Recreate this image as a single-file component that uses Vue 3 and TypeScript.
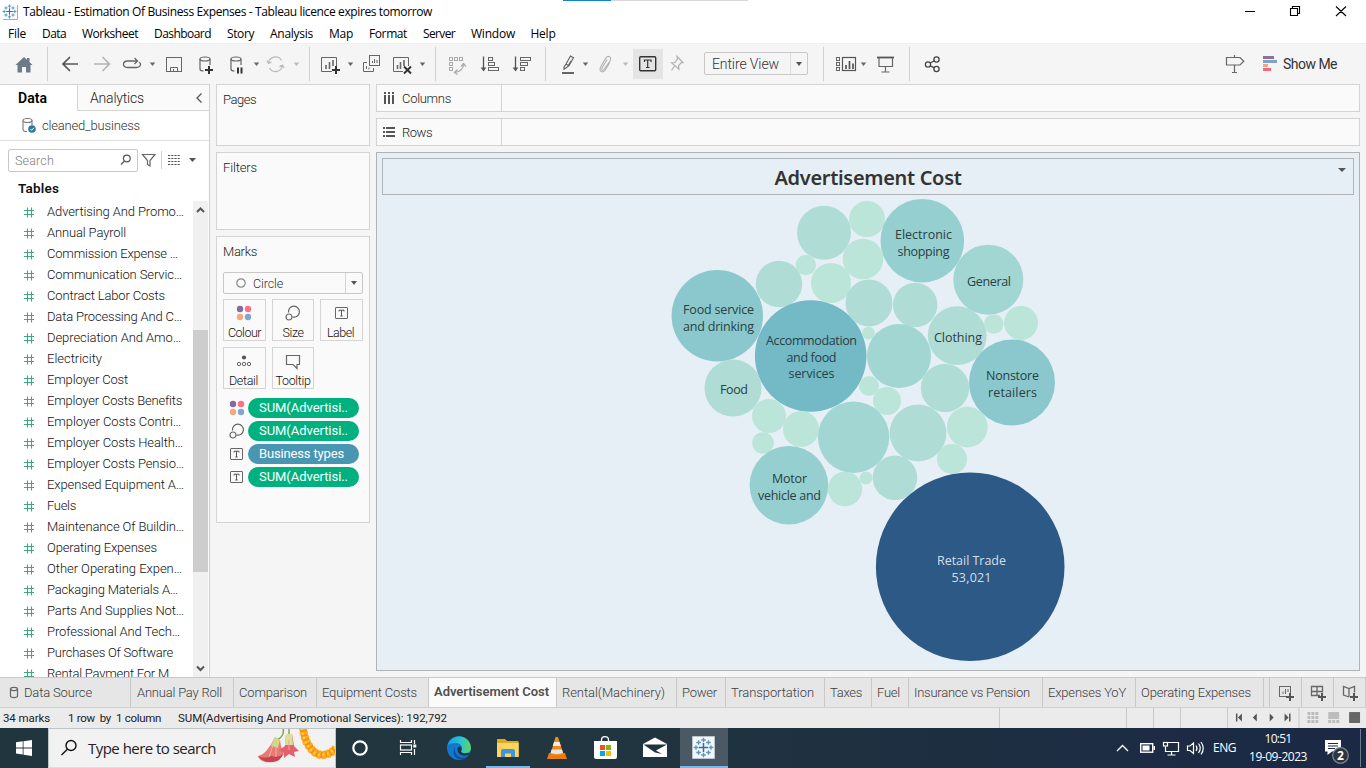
<script setup lang="ts">
interface Cell { x: number; w: number; art: string }
interface Bubble { x: number; y: number; r: number; c: string }
interface Label { x: number; y: number; w: number; t: string }

// Spreads the letters of a label so that it fills the given width in pixels.
const vFit = {
  mounted(el: HTMLElement, binding: { value: number }) {
    const chars = (el.textContent ?? '').length
    const natural = el.getBoundingClientRect().width
    el.style.letterSpacing = `${(binding.value - natural) / chars}px`
  },
}

const menus: [string, number, number][] = [
  ['File', 34, 18], ['Data', 40, 24], ['Worksheet', 72, 56], ['Dashboard', 73, 57], ['Story', 43, 27],
  ['Analysis', 59, 43], ['Map', 40, 24], ['Format', 54, 38], ['Server', 48, 32], ['Window', 60, 44], ['Help', 40, 25],
]

const caret = (x: number, c = '#666') => `<path d="M${x - 2.7} 62.500h5.400l-2.700 3.500z" fill="${c}"/>`
const sep = (x: number) => `<path d="M${x} 47v34" stroke="#cfcfcf"/>`
const box = (x: number, y: number, w: number, h: number, c = '#666') =>
  `<rect x="${x}" y="${y}" width="${w}" height="${h}" fill="none" stroke="${c}"/>`
const cylinder = (x: number) =>
  `<g fill="none" stroke="#666" stroke-width="1.200"><ellipse cx="${x + 5}" cy="59" rx="5" ry="2"/><path d="M${x} 59v10q0 2 3.500 2M${x + 10} 59v6"/></g>`
const plus = (x: number, y: number) => `<path d="M${x - 4} ${y}h8M${x} ${y - 4}v8" stroke="#333" stroke-width="2"/>`
const plusGrey = (x: number, y: number) => `<path d="M${x - 4} ${y}h8M${x} ${y - 4}v8" stroke="#555" stroke-width="2"/>`

const tools: Cell[] = [
  { x: 0, w: 50, art: `<path d="M15.500 65L24 57l3 2.800V58h2.500v4l3 3H30.500v7.500H26v-5.500h-4v5.500H17.500V65z" fill="#6c7a8a"/>` + sep(47.5) },
  { x: 50, w: 36, art: `<path d="M78 64H63M70 57l-7 7 7 7" fill="none" stroke="#555" stroke-width="1.700"/>` },
  { x: 86, w: 32, art: `<path d="M94 64h15M102.500 57l7 7-7 7" fill="none" stroke="#b5b5b5" stroke-width="1.700"/>` },
  { x: 118, w: 42, art: `<path d="M132 67.500h-4.500q-4-.300-4-3.300t4-3.200H137M134.500 58l3 3-3 3M139 62.300q1.700 1 1.500 2.200-.300 2.700-4 3H132" fill="none" stroke="#666" stroke-width="1.300"/>` + caret(152.5) },
  { x: 160, w: 30, art: box(166.5, 57.5, 15, 14) + `<path d="M170.500 71.500v-4h7v4M173.500 69v2" fill="none" stroke="#666"/>` },
  { x: 190, w: 32, art: cylinder(200) + plus(209, 70) },
  { x: 222, w: 42, art: cylinder(231) + `<path d="M238 67.500v6M241.500 67.500v6" stroke="#333" stroke-width="2"/>` + caret(256.5) },
  { x: 264, w: 47, art: `<path d="M268.500 63a7 7 0 0 1 13-2.500M282.500 65.500a7 7 0 0 1-13 2.500M267 60.500l1.500 3 3-1.500M284 68l-1.500-3-3 1.500" fill="none" stroke="#b9b9b9" stroke-width="1.200"/>` + caret(296.5, '#bbb') + sep(309.5) },
  { x: 311, w: 47, art: `<path d="M332 71.500H321.500V57.500h15V66" fill="none" stroke="#666"/><path d="M326 69v-4M329.500 69v-7M333 66v-6" stroke="#666" stroke-width="1.600"/>` + plus(336, 70) + caret(350.5) },
  { x: 358, w: 27, art: `<path d="M367 62.500h-3.500v9h10v-3.500M366.500 69v-3M369 69.500v-2" fill="none" stroke="#666"/>` + box(369.5, 55.5, 10, 10) + `<path d="M372.500 63v-2M374.500 63v-4M377 63v-3" stroke="#666"/>` },
  { x: 385, w: 52, art: `<path d="M403 71.500H393.500V57.500h15V66" fill="none" stroke="#666"/><path d="M397.500 69v-4M400.500 69v-7M404 66v-6" stroke="#666" stroke-width="1.600"/><path d="M404 66.500l7 7M411 66.500l-7 7" stroke="#333" stroke-width="2"/>` + caret(422.5) + sep(435.5) },
  { x: 437, w: 36, art: box(449.5, 57.5, 3, 3, '#aaa') + box(454.500, 57.5, 3, 3, '#aaa') + box(459.5, 57.5, 3, 3, '#aaa') + box(449.5, 62.5, 3, 3, '#aaa') + box(449.5, 67.5, 3, 3, '#aaa') + `<path d="M463.500 64q0 7-8.500 8.500M461 66.500l2.500-3 2.500 3M457.500 69.500l-3 3 3 2" fill="none" stroke="#aaa" stroke-width="1.200"/>` },
  { x: 473, w: 32, art: `<path d="M483.500 56.500v13" stroke="#555" stroke-width="1.300"/><path d="M480.700 67.500h5.600l-2.800 4z" fill="#555"/>` + box(488.5, 57.5, 4, 3) + box(488.5, 62.500, 6, 3) + box(488.5, 67.5, 10, 3) },
  { x: 505, w: 42, art: `<path d="M515.500 56.500v13" stroke="#555" stroke-width="1.300"/><path d="M512.700 67.500h5.600l-2.800 4z" fill="#555"/>` + box(520.5, 57.5, 10, 3) + box(520.5, 62.500, 7, 3) + box(520.5, 67.5, 4, 3) + sep(545.5) },
  { x: 547, w: 46, art: `<path d="M566 64l4.500-8 3 1.700-4.500 8-3.500 2.500-1.500 1v-2zM566 64l3 1.700M568 66l3-5" fill="none" stroke="#666" stroke-width="1.200"/><path d="M562 73h12" stroke="#555" stroke-width="1.800"/>` + caret(585.5) },
  { x: 593, w: 40, art: `<path d="M607 59.500l-5 8.500q-1 2 .700 2.300 1 .100 1.500-1L610 61q1.600-3.300-.500-4.300-2-.900-3.600 1.200l-5 8.500q-2 4 .400 5.200 2.600.900 4-1.600l4.500-7.500" fill="none" stroke="#b2b2b2" stroke-width="1.100"/>` + caret(625.5, '#bbb') },
  { x: 633, w: 30, art: `<path d="M633 49h30v30h-30z" fill="#e4e4e4"/><rect x="639.700" y="56.700" width="16" height="14" rx="1" fill="none" stroke="#333" stroke-width="1.400"/><path d="M644.500 62v-2h6.500v2M647.700 60v7.500M646 67.500h3.500" fill="none" stroke="#333" stroke-width="1.200"/>` },
  { x: 663, w: 41, art: `<path d="M677 56.500l6 6-2 .300-2.500 3 .500 3.500-7.500-6.500 3.500-.300 2.500-3.500zM674.500 66l-3 4.500" fill="none" stroke="#b2b2b2" stroke-width="1.200"/>` },
]
const toolsAfter: Cell[] = [
  { x: 808, w: 64, art: sep(823.5) + box(836.5, 57.5, 3, 3) + box(836.5, 62.5, 3, 3) + box(836.5, 67.5, 3, 3) + `<rect x="842.500" y="57.500" width="13" height="13" fill="none" stroke="#555" stroke-width="1.200"/><path d="M846 69v-4M849.500 69v-8M853 69v-5.500" stroke="#555" stroke-width="1.700"/>` + caret(863.5) },
  { x: 872, w: 38, art: `<path d="M877 57.500h17" stroke="#555" stroke-width="1.800"/><path d="M879 58v8.500h13.500V58M885.500 66.500v5.500M881.500 72h8" fill="none" stroke="#666" stroke-width="1.200"/>` + sep(909.5) },
  { x: 910, w: 40, art: `<g fill="none" stroke="#444" stroke-width="1.300"><circle cx="928" cy="64.500" r="2.600"/><circle cx="936.500" cy="59.500" r="2.600"/><circle cx="936.500" cy="69" r="2.600"/><path d="M930.300 63l4-2.200M930.300 65.800l4 2"/></g>` },
]
const signpost: Cell = { x: 1216, w: 40, art: `<path d="M1226.500 57.500h13.500l3.800 3.800-3.800 3.700h-13.500zM1234.500 55v2.500M1234.500 65v7.500M1232 72.500h5" fill="none" stroke="#666" stroke-width="1.200"/>` }
const showMe: Cell = { x: 1256, w: 27, art: `<path d="M1263 56h11v3h-11z" fill="#8b6f9c"/><path d="M1263 60h14v3h-14z" fill="#7da3cc"/><path d="M1263 64h5v3h-5z" fill="#f3a67a"/><path d="M1263 68h8v3h-8z" fill="#f6677c"/>` }

const fields: [string, number][] = [
  ['Advertising And Promo…', 137], ['Annual Payroll', 79], ['Commission Expense …', 131], ['Communication Servic…', 135],
  ['Contract Labor Costs', 118], ['Data Processing And C…', 135], ['Depreciation And Amo…', 134], ['Electricity', 55],
  ['Employer Cost', 81], ['Employer Costs Benefits', 135], ['Employer Costs Contri…', 134], ['Employer Costs Health…', 136],
  ['Employer Costs Pensio…', 137], ['Expensed Equipment A…', 137], ['Fuels', 29], ['Maintenance Of Buildin…', 137],
  ['Operating Expenses', 110], ['Other Operating Expen…', 135], ['Packaging Materials A…', 131], ['Parts And Supplies Not…', 137],
  ['Professional And Tech…', 133], ['Purchases Of Software', 126], ['Rental Payment For M', 122],
]

const dots = `<circle cx="-4" cy="-4" r="3.200" fill="#836c99"/><circle cx="4" cy="-4" r="3.200" fill="#fb7287"/><circle cx="-4" cy="4" r="3.200" fill="#f5a880"/><circle cx="4" cy="4" r="3.200" fill="#7fa6cf"/>`
const sizeArt = `<g fill="none" stroke="#666" stroke-width="1.200"><path d="M-4.500-.500A5.500 5.500 0 1 1-.500 4"/><circle cx="-4" cy="4" r="3"/></g>`
const textArt = `<rect x="-6.500" y="-5.500" width="12" height="11" rx=".500" fill="none" stroke="#666"/><path d="M-3-1.500v-1.300h5v1.300M-.500-2.800V3M-1.700 3h2.400" fill="none" stroke="#555"/>`
const detailArt = `<circle cx="0" cy="-3.500" r="2.100" fill="#555"/><g fill="none" stroke="#666"><circle cx="-5" cy="3" r="1.700"/><circle cx="0" cy="3" r="1.700"/><circle cx="5" cy="3" r="1.700"/></g>`
const tipArt = `<path d="M-6.500-5.500h13v9H4v4l-4-4h-6.500z" fill="none" stroke="#666" stroke-width="1.200"/>`
const markButtons = [
  { t: 'Colour', w: 33, art: dots }, { t: 'Size', w: 21, art: sizeArt }, { t: 'Label', w: 27, art: textArt },
  { t: 'Detail', w: 29, art: detailArt }, { t: 'Tooltip', w: 35, art: tipArt },
]
const pills = [
  { t: 'SUM(Advertisi..', w: 89, art: dots, dim: false }, { t: 'SUM(Advertisi..', w: 89, art: sizeArt, dim: false },
  { t: 'Business types', w: 85, art: textArt, dim: true }, { t: 'SUM(Advertisi..', w: 89, art: textArt, dim: false },
]

const c1 = '#bce5d9', c2 = '#afddd6', c3 = '#a1d6d2', c4 = '#95cfcf', c5 = '#8bc8cd'
const bubbles: Bubble[] = [
  { x: 824, y: 232.7, r: 27, c: c2 }, { x: 867, y: 219, r: 18, c: c1 }, { x: 922.3, y: 240.7, r: 41.8, c: c4 },
  { x: 988.3, y: 279.7, r: 35, c: c3 }, { x: 805.8, y: 265, r: 10.2, c: c1 }, { x: 863, y: 259, r: 20.3, c: c1 },
  { x: 779, y: 284, r: 23.2, c: c2 }, { x: 831, y: 283, r: 20, c: c1 }, { x: 717.3, y: 315.7, r: 45.7, c: c5 },
  { x: 810.7, y: 356, r: 55.8, c: '#73b9c6' }, { x: 869, y: 303, r: 23.5, c: c2 }, { x: 915.2, y: 305, r: 22.2, c: c2 },
  { x: 957.2, y: 335.7, r: 29.4, c: c2 }, { x: 993.8, y: 324, r: 9.8, c: c1 }, { x: 1021, y: 323, r: 17, c: c1 },
  { x: 868.5, y: 333, r: 6.3, c: c1 }, { x: 899, y: 356, r: 32, c: c3 }, { x: 869, y: 386, r: 10, c: c1 },
  { x: 887, y: 401, r: 14, c: c1 }, { x: 945, y: 388, r: 24.2, c: c2 }, { x: 1012, y: 382.4, r: 43, c: c5 },
  { x: 733, y: 388, r: 28.5, c: c2 }, { x: 769, y: 416, r: 17, c: c1 }, { x: 763, y: 443, r: 10.8, c: c1 },
  { x: 801, y: 429, r: 18, c: c1 }, { x: 853.6, y: 437.2, r: 35.7, c: c3 }, { x: 918, y: 433, r: 28.4, c: c2 },
  { x: 967.3, y: 427, r: 20.4, c: c1 }, { x: 952, y: 459, r: 15, c: c1 }, { x: 788.9, y: 485.3, r: 39.3, c: c4 },
  { x: 845, y: 489, r: 17.2, c: c1 }, { x: 866, y: 478, r: 6.5, c: c1 }, { x: 895, y: 477.8, r: 22.3, c: c2 },
  { x: 970.2, y: 566.8, r: 94.3, c: '#2c5985' },
]
const labels: Label[] = [
  { x: 923.5, y: 239, w: 57, t: 'Electronic' }, { x: 923.5, y: 256, w: 52, t: 'shopping' }, { x: 989, y: 286, w: 44, t: 'General' },
  { x: 718.5, y: 314, w: 71, t: 'Food service' }, { x: 718.5, y: 331, w: 71, t: 'and drinking' },
  { x: 811.5, y: 345, w: 91, t: 'Accommodation' }, { x: 811.5, y: 362, w: 50, t: 'and food' }, { x: 811.5, y: 378, w: 46, t: 'services' },
  { x: 958, y: 342, w: 48, t: 'Clothing' }, { x: 1012.5, y: 380, w: 53, t: 'Nonstore' }, { x: 1012.5, y: 397, w: 49, t: 'retailers' },
  { x: 734, y: 394, w: 28, t: 'Food' }, { x: 789.5, y: 483, w: 35, t: 'Motor' }, { x: 789.5, y: 500, w: 63, t: 'vehicle and' },
]
const darkLabels: Label[] = [
  { x: 971.5, y: 565, w: 69, t: 'Retail Trade' }, { x: 971.5, y: 582, w: 40, t: '53,021' },
]

const sheets = [
  { t: 'Annual Pay Roll', w: 103, tw: 85 }, { t: 'Comparison', w: 83, tw: 68 }, { t: 'Equipment Costs', w: 112, tw: 95 },
  { t: 'Advertisement Cost', w: 128, tw: 115 }, { t: 'Rental(Machinery)', w: 120, tw: 103 }, { t: 'Power', w: 49, tw: 35 },
  { t: 'Transportation', w: 99, tw: 83 }, { t: 'Taxes', w: 47, tw: 32 }, { t: 'Fuel', w: 37, tw: 23 },
  { t: 'Insurance vs Pension', w: 134, tw: 116 }, { t: 'Expenses YoY', w: 93, tw: 78 }, { t: 'Operating Expenses', w: 128, tw: 110 },
]
const newSheets: Cell[] = [
  { x: 1269, w: 32, art: box(1278.500, 686.5, 11, 10) + `<path d="M1282 694v-2.500M1284.500 694v-5M1287 692v-3" stroke="#666"/>` + plusGrey(1289, 697) },
  { x: 1301, w: 32, art: `<path d="M1319 695.500h-8.500v-9h11v6M1310.500 691.500h11M1316 686.500v9" fill="none" stroke="#666" stroke-width="1.300"/>` + plusGrey(1321, 697) },
  { x: 1333, w: 33, art: `<path d="M1348 697l-5.500-2v-8.500l5.500 2 5.500-2v6M1348 688.500v8.500" fill="none" stroke="#666" stroke-width="1.300"/>` + plusGrey(1353, 697) },
]
const nav: Cell = { x: 1228, w: 138, art: `<g fill="#555"><path d="M1236 713.500h1.500v8H1236zM1242 713.500v8l-4-4zM1257 713.500v8l-4-4zM1270 713.500v8l4-4zM1285 713.500v8l4-4zM1289.500 713.500h1.500v8h-1.500z"/><rect x="1350" y="712" width="11" height="11" fill="#666"/></g><path d="M1299.500 708v20" stroke="#c9c9c9"/><path d="M1308 713.500h11M1308 717.500h11M1308 721.500h11" stroke="#bcbcbc" stroke-width="3" stroke-dasharray="3 1"/><path d="M1329 712h11v7h-11z" fill="#bcbcbc"/><path d="M1329 721.500h11" stroke="#bcbcbc" stroke-width="3" stroke-dasharray="3 1"/>` }

const cross = (x: number, y: number, r: number) => `M${x - r} ${y}h${2 * r}M${x} ${y - r}v${2 * r}`
const tableau = (x: number, y: number, k: number) => {
  const far = 6.5 * k, near = 4.3 * k
  const arms = [[0, -far], [0, far], [-far, 0], [far, 0], [-near, -near], [near, -near], [-near, near], [near, near]]
  return `<path d="${cross(x, y, 4 * k)}" stroke="#2f6f9f" stroke-width="${1.3 * k}"/><path d="${arms.map(([dx, dy]) => cross(x + dx, y + dy, 2 * k)).join('')}" stroke="#5f98be" stroke-width="${1.2 * k}"/>`
}
const appIcon = tableau(9.5, 10.5, 0.82)

const garland = `<path d="M303 727q1 12 6 19 6 9 14 9 8-1 13-7" fill="none" stroke="#f98f08" stroke-width="7"/><path d="M303 727q1 12 6 19 6 9 14 9 8-1 13-7" fill="none" stroke="#ffad20" stroke-width="8.500" stroke-dasharray="2.800 1.800"/><path d="M302 728q1 11 6 18 6 9 14 9 8-1 13-7" fill="none" stroke="#ffd257" stroke-width="2" stroke-dasharray="2 2.600"/>`
const flowers = `<path d="M283 728q2 8-6 12M289 728v8" fill="none" stroke="#8aa548" stroke-width="1.500"/>
<path d="M275 737l5 3q1 9 4 14l-5 5q-6 4-14 3-6-2-7-6 5-1 9-6 5-6 8-13z" fill="#e87974"/><path d="M275 737l5 3-2 8-7-2z" fill="#cfd98a"/><path d="M258 756q8 3 13 0 7 2 12-2-2 7-10 8-10 1-15-6z" fill="#c9434d"/><path d="M273 745l-4 12M276 746l0 11" stroke="#f5b2a2"/>
<path d="M286 734h6l2 12 5 5-5 1 1 5-6-3-5 4v-5l-5-3 6-4z" fill="#e4606a"/><path d="M286 734h6l1 11h-8z" fill="#dbe09a"/><path d="M289 740v10" stroke="#f4a19b"/>`
const searchArt: Cell = { x: 250, w: 85, art: flowers + garland }

const taskIcons: (Cell & { on?: boolean; open?: boolean })[] = [
  { x: 336, w: 48, art: `<circle cx="360" cy="748" r="6.700" fill="none" stroke="#fff" stroke-width="2.200"/>` },
  { x: 384, w: 48, art: `<g fill="none" stroke="#fff" stroke-width="1.200"><path d="M400.500 740v2.500h11V740M400.500 755v-2.500h11v2.500M414.500 740v4M414.500 749v6"/><rect x="400.500" y="745" width="11" height="5"/></g><rect x="413.300" y="744.500" width="3" height="3" fill="#fff"/>` },
  { x: 432, w: 54, art: `<defs><linearGradient id="sea" x1="0" y1="0" x2="1" y2="0"><stop offset="0" stop-color="#1c9be0"/><stop offset=".6" stop-color="#2fc6cf"/><stop offset="1" stop-color="#62d84d"/></linearGradient></defs><circle cx="459" cy="748" r="12" fill="#1477cf"/><path d="M447.500 745A12 12 0 0 1 471 748q0 5-6 5.300-4-.100-4-2.300 1.500-1 1-3.500-1-4.500-6-4.500-5 0-8.500 2z" fill="url(#sea)"/><path d="M455 747q-4 8 3 12 5 2 10-3-6 3-10 0-4-3-3-9z" fill="#0d4fa3"/><path d="M457.500 748q-.500 6 5 7.500 4 .800 7.500-1.500l-1.500-1q-7 1.500-7.500-2 1.500-2-.500-4.500-2-.500-3 1.500z" fill="#203540"/>` },
  { x: 486, w: 44, open: true, art: `<path d="M497 739h8l2 2h11.500v16H497z" fill="#e3a91e"/><path d="M497 743h21.700v14H497z" fill="#fcd45f"/><path d="M501 757v-6q0-2 2-2h10q2 0 2 2v6h-4v-3.500h-6v3.500z" fill="#3f95dc"/>` },
  { x: 530, w: 53, art: `<path d="M549 753h16l2 6h-20z" fill="#e97a10"/><path d="M555.500 737h2.500l5.500 17q-6.500 3-13 0z" fill="#f28a1c"/><path d="M554 742h5.500l1.300 4h-8z" fill="#eee"/><path d="M551.500 749.500h10.500l1 3.500q-6 2-12.500 0z" fill="#e6e6e6"/>` },
  { x: 583, w: 46, art: `<path d="M601.500 742v-2q0-3.300 3.500-3.300t3.500 3.300v2" fill="none" stroke="#fff" stroke-width="1.300"/><path d="M594 741h23v16q0 2-2 2h-19q-2 0-2-2z" fill="#fff"/><path d="M600 745h5v5h-5z" fill="#f05022"/><path d="M606 745h5v5h-5z" fill="#7fba00"/><path d="M600 751h5v5h-5z" fill="#00a4ef"/><path d="M606 751h5v5h-5z" fill="#ffb900"/>` },
  { x: 629, w: 51, art: `<path d="M643 744l12-6.500 12 6.500v13h-24z" fill="#fff"/><path d="M643.500 744.500h23.500l-11 6 6 3.500-7-1.500z" fill="#1f343f"/>` },
  { x: 680, w: 48, on: true, open: true, art: `<path d="M692.500 736.500h22v22h-22z" fill="#f4f6f8" stroke="#b9c4cc"/>` + tableau(703.5, 747.5, 1.15) },
]
const tray: Cell = { x: 1110, w: 100, art: `<path d="M1117 751l5.500-5.500 5.500 5.500" fill="none" stroke="#fff" stroke-width="1.400"/><rect x="1140.700" y="743.700" width="12" height="8.500" fill="none" stroke="#fff" stroke-width="1.400"/><path d="M1142.500 745.500h7v5h-7zM1153.500 746h1.500v4h-1.500z" fill="#fff"/><g fill="none" stroke="#fff" stroke-width="1.200"><path d="M1168 742.500h10.500v9h-13v-5M1171.500 751.500v3.500M1167.500 755h8M1165.500 747v4"/><rect x="1163.500" y="742.500" width="4" height="3.500"/><path d="M1187.500 746v4.500h2.500l3.500 3v-10.500l-3.500 3zM1196 745.500q2 2.800 0 5.500M1198.500 743.500q3.500 4.700 0 9.500M1201 742q4.500 6.200 0 12.500"/></g>` }
const action: Cell = { x: 1312, w: 48, art: `<path d="M1325 740h16v11.500h-9l-4.500 3.500v-3.500h-2.500z" fill="#fff"/><path d="M1328 743.500h10M1328 746h10M1328 748.500h7" stroke="#1b2a42"/><circle cx="1340.500" cy="755.500" r="7.800" fill="#2d3440" stroke="#7d838c" stroke-width="1.300"/>` }
</script>

<template>
  <div class="desk">
    <div class="title">
      <svg class="ico" width="18" height="22" viewBox="0 0 18 22"><path d="M2 3h15v15H2z" fill="#fbfdff" /><path d="M3 18.500h14.500V4" fill="none" stroke="#aaa" /><g v-html="appIcon" /></svg>
      <span v-fit="409">Tableau - Estimation Of Business Expenses - Tableau licence expires tomorrow</span>
      <svg class="ico winbtns" width="126" height="22" viewBox="1240 0 126 22" fill="none" stroke="#000" stroke-width="1.100">
        <path d="M1245 10.500h10M1292.500 7.500v-2h7v7h-2M1290.500 7.500h7v7h-7zM1336 5.500l10 9.500M1346 5.500l-10 9.500" />
      </svg>
    </div>

    <div class="menu">
      <div v-for="m in menus" :key="m[0]" class="mi" :style="{ width: m[1] + 'px' }"><span v-fit="m[2]">{{ m[0] }}</span></div>
    </div>

    <div class="toolbar">
      <svg v-for="c in tools" :key="c.x" class="ico" :width="c.w" height="41" :viewBox="`${c.x} 43 ${c.w} 41`" v-html="c.art" />
      <div class="fitsel"><span v-fit="67">Entire View</span><i class="arrow" /></div>
      <svg v-for="c in toolsAfter" :key="c.x" class="ico" :width="c.w" height="41" :viewBox="`${c.x} 43 ${c.w} 41`" v-html="c.art" />
      <svg class="ico push" :width="signpost.w" height="41" :viewBox="`${signpost.x} 43 ${signpost.w} 41`" v-html="signpost.art" />
      <svg class="ico" :width="showMe.w" height="41" :viewBox="`${showMe.x} 43 ${showMe.w} 41`" v-html="showMe.art" />
      <div class="showme"><span v-fit="54">Show Me</span></div>
    </div>

    <div class="main">
      <aside class="data">
        <div class="tabs">
          <div class="tab on"><span v-fit="29">Data</span></div>
          <div class="tab"><span v-fit="54">Analytics</span>
            <svg class="ico" width="10" height="12" viewBox="0 0 10 12"><path d="M6.500 1.500L2 6l4.500 4.500" fill="none" stroke="#555" stroke-width="1.300" /></svg>
          </div>
        </div>
        <div class="source">
          <svg class="ico" width="15" height="17" viewBox="0 0 15 17"><g fill="none" stroke="#777" stroke-width="1.100"><ellipse cx="5.500" cy="3.500" rx="4.500" ry="2" /><path d="M1 3.500v9q0 2 4 2.200M10 3.500V8" /></g><circle cx="10" cy="12" r="3.800" fill="#2d7a9c" /><path d="M8.300 12l1.300 1.300 2.300-2.500" fill="none" stroke="#fff" /></svg>
          <span v-fit="98">cleaned_business</span>
        </div>
        <div class="finder">
          <div class="search"><span v-fit="39">Search</span>
            <svg class="ico" width="12" height="12" viewBox="0 0 12 12"><g fill="none" stroke="#555" stroke-width="1.200"><circle cx="6.800" cy="4.500" r="3.400" /><path d="M4.500 7L1 10.500" /></g></svg>
          </div>
          <svg class="ico" width="61" height="24" viewBox="139 148 61 24"><path d="M142.500 154.500h12.500l-5 6v5.500l-2.500-1.500v-4z" fill="none" stroke="#666" stroke-width="1.200" /><path d="M161.500 151v18" stroke="#d0d0d0" /><path d="M168 155.500h12M168 158.500h12M168 161.500h12M168 164.500h12" stroke="#555" stroke-dasharray="2.200 1" /><path d="M189 158h7l-3.500 4z" fill="#555" /></svg>
        </div>
        <div class="tables"><span v-fit="41">Tables</span></div>
        <div class="list">
          <div class="rows">
            <div v-for="f in fields" :key="f[0]" class="row">
              <svg class="ico" width="12" height="12" viewBox="0 0 12 12"><path d="M1 4.500h10M1 8.500h10M4.500 1.500v10M8.500 1.500v10" stroke="#3fa787" stroke-width="1.100" /></svg>
              <span v-fit="f[1]">{{ f[0] }}</span>
            </div>
          </div>
          <div class="scroll">
            <svg class="ico" width="15" height="18" viewBox="0 0 15 18"><path d="M4 11l3.500-3.500L11 11" fill="none" stroke="#555" stroke-width="2" /></svg>
            <div class="thumb" />
            <svg class="ico down" width="15" height="18" viewBox="0 0 15 18"><path d="M4 7.500L7.500 11 11 7.500" fill="none" stroke="#555" stroke-width="2" /></svg>
          </div>
        </div>
      </aside>

      <section class="cards">
        <div class="card pages"><span v-fit="33">Pages</span></div>
        <div class="card filters"><span v-fit="34">Filters</span></div>
        <div class="card marks">
          <span v-fit="34">Marks</span>
          <div class="marktype">
            <svg class="ico" width="12" height="12" viewBox="0 0 12 12"><circle cx="6" cy="6" r="4.200" fill="none" stroke="#888" stroke-width="1.200" /></svg>
            <span v-fit="30">Circle</span><i class="arrow" />
          </div>
          <div class="grid">
            <div v-for="b in markButtons" :key="b.t" class="mb">
              <svg class="ico" width="18" height="18" viewBox="-9 -9 18 18" v-html="b.art" />
              <span v-fit="b.w">{{ b.t }}</span>
            </div>
          </div>
          <div class="pills">
            <div v-for="(p, i) in pills" :key="i" class="pl">
              <svg class="ico" width="18" height="18" viewBox="-9 -9 18 18" v-html="p.art" />
              <div class="pill" :class="{ dim: p.dim }"><span v-fit="p.w">{{ p.t }}</span></div>
            </div>
          </div>
        </div>
      </section>

      <section class="work">
        <div class="shelf">
          <div class="sl"><svg class="ico" width="12" height="12" viewBox="0 0 12 12"><path d="M2 0v12M6 0v12M10 0v12" stroke="#555" stroke-width="2" /><path d="M0 2.500h12" stroke="#fafafa" /></svg><span v-fit="49">Columns</span></div>
        </div>
        <div class="shelf">
          <div class="sl"><svg class="ico" width="12" height="12" viewBox="0 0 12 12"><path d="M0 2h12M0 6h12M0 10h12" stroke="#555" stroke-width="2" /><path d="M2.500 0v12" stroke="#fafafa" /></svg><span v-fit="30">Rows</span></div>
        </div>
        <div class="view">
          <div class="vt"><span v-fit="187">Advertisement Cost</span><i class="arrow" /></div>
          <svg class="chart" width="972" height="470" viewBox="382 195 972 470">
            <circle v-for="(b, i) in bubbles" :key="i" :cx="b.x" :cy="b.y" :r="b.r" :fill="b.c" />
            <text v-for="l in labels" :key="l.t" :x="l.x" :y="l.y" :textLength="l.w">{{ l.t }}</text>
            <text v-for="l in darkLabels" :key="l.t" class="light" :x="l.x" :y="l.y" :textLength="l.w">{{ l.t }}</text>
          </svg>
        </div>
      </section>
    </div>

    <div class="sheets">
      <div class="sheet src"><svg class="ico" width="10" height="13" viewBox="0 0 10 13"><g fill="none" stroke="#666" stroke-width="1.200"><ellipse cx="5" cy="3" rx="3.500" ry="1.600" /><path d="M1.500 3v7q0 1.500 3.500 1.600 3.500-.100 3.500-1.600V3" /></g></svg><span v-fit="68">Data Source</span></div>
      <div v-for="s in sheets" :key="s.t" class="sheet" :class="{ on: s.t === 'Advertisement Cost' }" :style="{ width: s.w + 'px' }"><span v-fit="s.tw">{{ s.t }}</span></div>
      <div class="gap" />
      <div v-for="c in newSheets" :key="c.x" class="new"><svg class="ico" width="32" height="30" :viewBox="`${c.x} 678 32 30`" v-html="c.art" /></div>
    </div>

    <div class="status">
      <span v-fit="47">34 marks</span><span v-fit="93" class="s2">1 row&nbsp; by&nbsp; 1 column</span><span v-fit="269" class="s3">SUM(Advertising And Promotional Services): 192,792</span>
      <i class="seg a" /><i class="seg b" /><i class="seg c" /><i class="seg d" />
      <svg class="ico seg e" width="139" height="20" :viewBox="`${nav.x} 708 139 20`" v-html="nav.art" />
    </div>

    <div class="taskbar">
      <svg class="ico" width="48" height="40" viewBox="0 728 48 40"><path d="M16 742.300l6.700-1v6.200H16zM23.500 741.200l8.500-1.200v7.500h-8.500zM16 748.400h6.700v6.200l-6.700-1zM23.500 748.400h8.500v7.600l-8.500-1.200z" fill="#fff" /></svg>
      <div class="tsearch">
        <svg class="ico" width="18" height="18" viewBox="0 0 18 18"><g fill="none" stroke="#111" stroke-width="1.400"><circle cx="11" cy="6.500" r="5" /><path d="M7.400 10.200L1.500 16" /></g></svg>
        <span v-fit="128">Type here to search</span>
        <svg class="ico art" :width="searchArt.w" height="38" :viewBox="`${searchArt.x} 729 ${searchArt.w} 38`" v-html="searchArt.art" />
      </div>
      <div v-for="t in taskIcons" :key="t.x" class="task" :class="{ on: t.on, open: t.open }"><svg class="ico" :width="t.w" height="40" :viewBox="`${t.x} 728 ${t.w} 40`" v-html="t.art" /></div>
      <svg class="ico push" :width="tray.w" height="40" :viewBox="`${tray.x} 728 ${tray.w} 40`" v-html="tray.art" />
      <div class="lang"><span v-fit="23">ENG</span></div>
      <div class="clock"><span v-fit="27">10:51</span><span v-fit="58">19-09-2023</span></div>
      <svg class="ico" :width="action.w" height="40" :viewBox="`${action.x} 728 ${action.w} 40`"><g v-html="action.art" /><text class="count" x="1340.500" y="760">2</text></svg>
      <div class="peek" />
    </div>
  </div>
</template>

<style>
body { margin: 0; overflow: hidden; }
</style>

<style scoped>
.desk { width: 1366px; height: 768px; background: #f5f5f5; font-family: Roboto, "Liberation Sans", sans-serif; font-size: 13px; color: #222; display: flex; flex-direction: column; overflow: hidden; font-weight: 300; }
.desk * { box-sizing: border-box; }
.desk span { white-space: pre; display: inline-block; }
.ico { display: block; flex: none; }
.arrow { width: 0; height: 0; flex: none; border: 3.500px solid transparent; border-top: 4.500px solid #555; border-bottom: 0; }
.push { margin-left: auto; }

.title { height: 23px; flex: none; display: flex; align-items: center; font: 12px/22px "Open Sans", "Noto Sans", sans-serif; color: #000; background: linear-gradient(90deg, #fff 563px, #1182d8 563px, #1182d8 611px, #d8d8d8 611px, #d8d8d8 748px, #fff 748px) 0 0 / 100% 1px no-repeat #fff; }
.title span { margin-left: 5px; }
.winbtns { margin-left: auto; }
.menu { height: 20px; flex: none; background: #fff; display: flex; font: 12px/21px "Open Sans", "Noto Sans", sans-serif; color: #000; }
.mi { flex: none; text-align: center; }
.toolbar { height: 41px; flex: none; display: flex; align-items: flex-start; border-top: 1px solid #efefef; }
.toolbar .ico { margin-top: -1px; }
.fitsel { width: 104px; height: 23px; margin-top: 8px; border: 1px solid #c8c8c8; border-radius: 2px; display: flex; align-items: center; padding-left: 7px; font-size: 14px; color: #333; }
.fitsel::after { content: ""; width: 1px; height: 21px; background: #ddd; order: 1; margin-left: auto; }
.fitsel .arrow { order: 2; margin-left: 5px; margin-right: 5px; }
.showme { width: 83px; font-size: 14px; line-height: 40px; color: #333; font-weight: 400; }

.main { height: 593px; flex: none; display: flex; }
.data { width: 210px; background: #fff; border-right: 1px solid #cfcfcf; border-top: 1px solid #d4d4d4; display: flex; flex-direction: column; overflow: hidden; }
.tabs { display: flex; height: 26px; flex: none; font-size: 14px; }
.tab { flex: 1; background: #fafafa; border-left: 1px solid #d4d4d4; border-bottom: 1px solid #d4d4d4; padding: 0 4px 0 12px; display: flex; align-items: center; justify-content: space-between; }
.tab.on { flex: 0 0 77px; background: #fff; border: 0; font-weight: 600; color: #000; padding-left: 18px; }
.source { height: 30px; flex: none; border-bottom: 1px solid #e0e0e0; display: flex; align-items: center; padding-left: 22px; gap: 5px; color: #333; }
.finder { height: 38px; flex: none; display: flex; align-items: center; padding-left: 8px; gap: 1px; }
.search { width: 130px; height: 23px; border: 1px solid #c8c8c8; border-radius: 2px; display: flex; align-items: center; justify-content: space-between; padding: 0 5px 0 6px; color: #808080; font-size: 12.500px; }
.tables { height: 22px; flex: none; padding-left: 18px; font-weight: 600; color: #111; font-size: 13.500px; line-height: 19px; }
.list { flex: 1; min-height: 0; display: flex; justify-content: space-between; overflow: hidden; }
.row { height: 21px; display: flex; align-items: center; padding-left: 23px; gap: 12px; color: #111; }
.scroll { width: 15px; background: #f0f0f0; margin-right: 1px; display: flex; flex-direction: column; }
.thumb { height: 242px; margin-top: 111px; background: #cdcdcd; }
.down { margin-top: auto; }

.cards { width: 154px; margin-left: 6px; display: flex; flex-direction: column; gap: 6px; color: #222; }
.card { background: #fafafa; border: 1px solid #d4d4d4; padding: 6px 6px; }
.pages { height: 62px; }
.filters { height: 78px; }
.marks { height: 287px; }
.card > span { line-height: 17px; }
.marktype { margin-top: 12px; height: 22px; border: 1px solid #c8c8c8; border-radius: 2px; display: flex; align-items: center; padding-left: 11px; gap: 6px; font-size: 12.500px; color: #333; }
.marktype::after { content: ""; width: 1px; height: 20px; background: #d4d4d4; order: 2; margin-left: auto; margin-right: -1px; }
.marktype .arrow { order: 3; margin-right: 5px; }
.grid { margin-top: 5px; display: grid; grid-template-columns: 43px 42px 43px; column-gap: 6px; row-gap: 6px; }
.mb { height: 42px; border: 1px solid #d4d4d4; display: flex; flex-direction: column; align-items: center; font-size: 12.500px; color: #111; padding-top: 4px; }
.mb:nth-child(3n+1) .ico { margin-right: 1px; }
.mb:nth-child(3) span { margin-right: 2px; }
.mb:nth-child(4) span { margin-right: 2px; }
.mb span { line-height: 14px; margin-top: 4px; }
.pills { margin-top: 9px; display: flex; flex-direction: column; gap: 4px; padding-left: 5px; }
.pl { display: flex; align-items: center; gap: 2px; height: 19px; }
.pill { width: 111px; height: 20px; border-radius: 10px; background: #00b180; color: #fff; padding-left: 11px; line-height: 19px; font-weight: 400; font-size: 13px; }
.pill.dim { background: #4996b2; }

.work { margin-left: 6px; width: 984px; display: flex; flex-direction: column; gap: 6px; }
.shelf { height: 28px; flex: none; border: 1px solid #d4d4d4; background: #fafafa; display: flex; }
.sl { width: 125px; border-right: 1px solid #d4d4d4; display: flex; align-items: center; padding-left: 6px; gap: 7px; color: #222; }
.view { height: 519px; flex: none; border: 1px solid #b0b3b6; background: #e6eff5; padding: 5px; }
.vt { height: 37px; border: 1px solid #b0b3b6; display: flex; justify-content: center; font: 600 20px/38px "Noto Sans", "Open Sans", sans-serif; color: #333; position: relative; }
.vt .arrow { position: absolute; right: 7px; top: 9px; border-width: 4.500px 4px 0; }
.chart { display: block; }
.chart text { font: 12.500px "Open Sans", "Noto Sans", sans-serif; fill: #2a4044; text-anchor: middle; }
.chart text.light { fill: #d3dfe9; }

.sheets { height: 31px; flex: none; background: #e6e6e6; border-top: 1px solid #c9c9c9; border-bottom: 1px solid #cfcfcf; display: flex; font-size: 13px; color: #3c3c3c; }
.sheet { flex: none; border-right: 1px solid #c9c9c9; padding-left: 5px; line-height: 30px; }
.sheet.src { width: 131px; padding-left: 9px; display: flex; align-items: center; gap: 5px; }
.sheet.src + .sheet { padding-left: 6px; }
.sheet.on { background: #fafafa; font-weight: 600; color: #505050; line-height: 27px; }
.gap { width: 6px; border-right: 1px solid #c9c9c9; }
.new { width: 32px; flex: none; border-right: 1px solid #c9c9c9; }
.status { height: 20px; flex: none; background: #ebebeb; display: flex; font-size: 11.500px; line-height: 20px; color: #222; padding-left: 3px; font-weight: 400; }
.s2 { margin-left: 18px; }
.s3 { margin-left: 17px; }
.seg { border-left: 1px solid #c9c9c9; height: 20px; flex: none; }
.seg.a { margin-left: auto; width: 127px; }
.seg.b { width: 27px; }
.seg.c { width: 27px; }
.seg.d { width: 47px; }

.taskbar { height: 40px; flex: none; display: flex; background: linear-gradient(90deg, #20353e 0, #21363f 560px, #1e2f41 900px, #1b2945 1366px); color: #fff; font-family: "Open Sans", "Noto Sans", sans-serif; font-weight: 400; }
.tsearch { width: 288px; background: #f2f2f2; border: 1px solid #bfc4c6; border-bottom-color: #ddd; display: flex; align-items: center; color: #222; font-size: 15px; padding-left: 11px; }
.tsearch span { margin-left: 10px; }
.art { margin-left: auto; }
.task { display: flex; }
.task.on { background: #4a5963; }
.task.open { box-shadow: inset 0 -2px 0 #76b9ed; }
.lang { width: 36px; padding-left: 3px; font-size: 12px; line-height: 39px; }
.clock { width: 66px; display: flex; flex-direction: column; align-items: center; font-size: 12px; line-height: 18px; padding: 2px 2px 0 0; }
.count { font: 700 12px "Open Sans", sans-serif; fill: #fff; text-anchor: middle; }
.peek { width: 6px; margin: 1px 0; border-left: 1px solid #6f7a8c; }
</style>
